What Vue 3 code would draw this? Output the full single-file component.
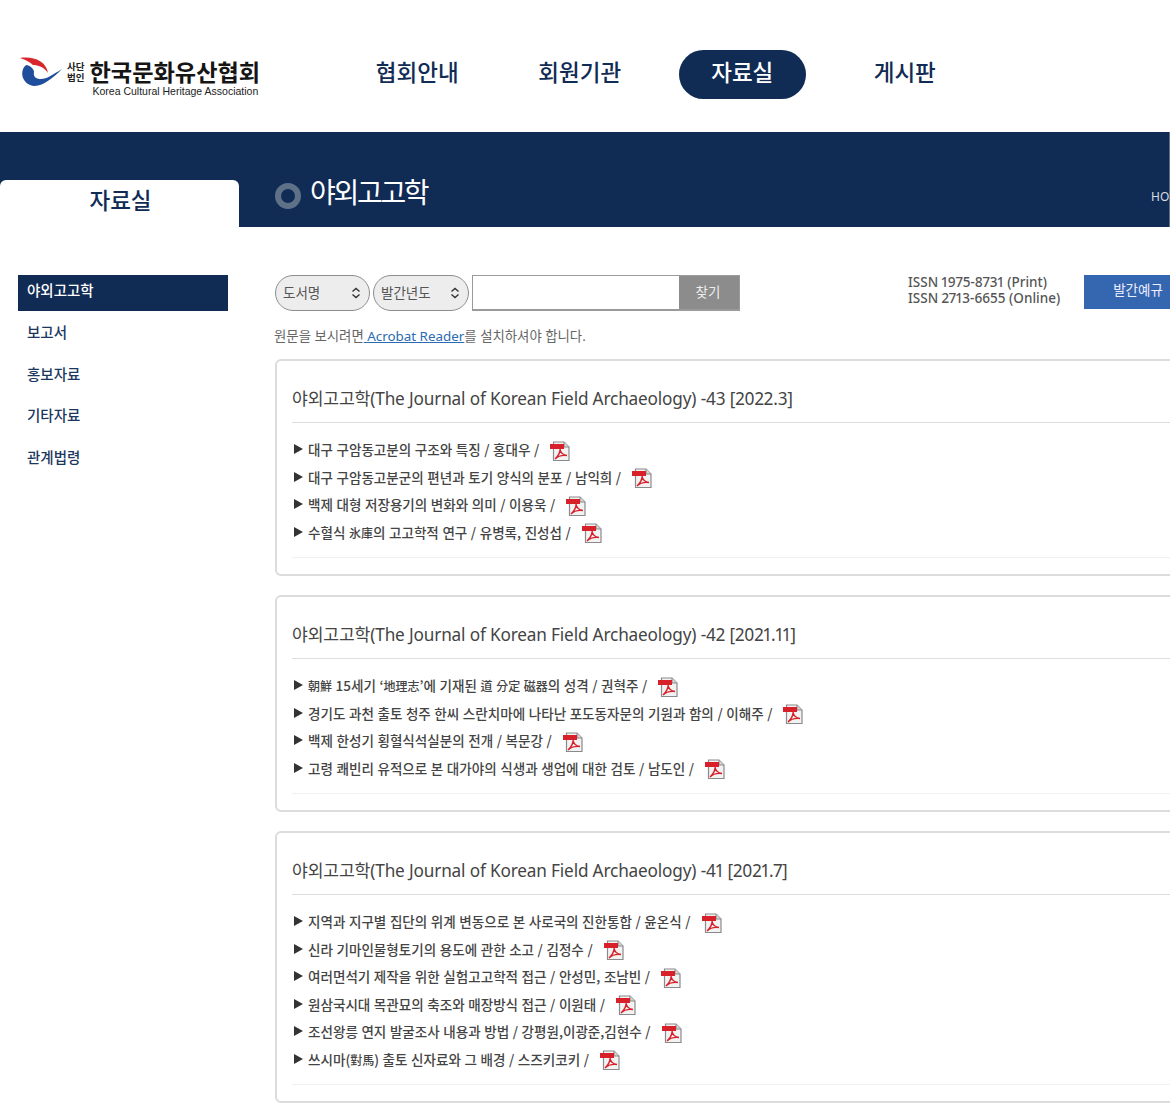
<script setup>
const navItems = ['협회안내', '회원기관', '자료실', '게시판']
const sideItems = ['야외고고학', '보고서', '홍보자료', '기타자료', '관계법령']
const volumes = [
  {
    title: '야외고고학(The Journal of Korean Field Archaeology) -43 [2022.3]',
    rows: [
      '대구 구암동고분의 구조와 특징 / 홍대우 /',
      '대구 구암동고분군의 편년과 토기 양식의 분포 / 남익희 /',
      '백제 대형 저장용기의 변화와 의미 / 이용욱 /',
      '수혈식 氷庫의 고고학적 연구 / 유병록, 진성섭 /'
    ]
  },
  {
    title: '야외고고학(The Journal of Korean Field Archaeology) -42 [2021.11]',
    rows: [
      '朝鮮 15세기 ‘地理志’에 기재된 道 分定 磁器의 성격 / 권혁주 /',
      '경기도 과천 출토 청주 한씨 스란치마에 나타난 포도동자문의 기원과 함의 / 이해주 /',
      '백제 한성기 횡혈식석실분의 전개 / 복문강 /',
      '고령 쾌빈리 유적으로 본 대가야의 식생과 생업에 대한 검토 / 남도인 /'
    ]
  },
  {
    title: '야외고고학(The Journal of Korean Field Archaeology) -41 [2021.7]',
    rows: [
      '지역과 지구별 집단의 위계 변동으로 본 사로국의 진한통합 / 윤온식 /',
      '신라 기마인물형토기의 용도에 관한 소고 / 김정수 /',
      '여러면석기 제작을 위한 실험고고학적 접근 / 안성민, 조남빈 /',
      '원삼국시대 목관묘의 축조와 매장방식 접근 / 이원태 /',
      '조선왕릉 연지 발굴조사 내용과 방법 / 강평원,이광준,김현수 /',
      '쓰시마(對馬) 출토 신자료와 그 배경 / 스즈키코키 /'
    ]
  }
]
// Hanja runs are set slightly smaller than the hangul around them
const segments = (text) => text.split(/([\u4e00-\u9fff]+)/).filter(Boolean)
const isHan = (s) => /[\u4e00-\u9fff]/.test(s)
</script>

<template>
  <div class="page">
    <header class="top">
      <div class="logo">
        <svg class="mark" width="43" height="31" viewBox="0 0 43 31">
          <path d="M0 1C12-1 26 3 28 16C24 10 18 8 13 8C10 5 6 3 0 1Z" fill="#d8262c" />
          <path d="M6 8C0 13 1 24 10 28C20 32 32 22 42 12C32 18 27 22 21 22C16 22 13 20 14 15C14 12 10 8 6 8Z" fill="#1f4e9c" />
        </svg>
        <div class="corp"><span>사단</span><span>법인</span></div>
        <div class="names">
          <div class="ko">한국문화유산협회</div>
          <div class="en">Korea Cultural Heritage Association</div>
        </div>
      </div>
      <nav class="gnb">
        <a v-for="n in navItems" :key="n" :class="{ on: n === '자료실' }">{{ n }}</a>
      </nav>
    </header>

    <section class="band">
      <div class="tab">자료실</div>
      <div class="band-title">
        <i class="ring"></i>
        <h1>야외고고학</h1>
      </div>
      <div class="crumb">HOME</div>
    </section>

    <div class="body">
      <aside class="side">
        <a v-for="s in sideItems" :key="s" :class="{ on: s === '야외고고학' }">{{ s }}</a>
      </aside>

      <main class="main">
        <div class="search">
          <div class="sel sel-a">도서명
            <svg width="10" height="12" viewBox="0 0 10 12"><path d="M1.5 4.5L5 1.5L8.5 4.5M1.5 7.5L5 10.5L8.5 7.5" fill="none" stroke="#333" stroke-width="1.4" /></svg>
          </div>
          <div class="sel sel-b">발간년도
            <svg width="10" height="12" viewBox="0 0 10 12"><path d="M1.5 4.5L5 1.5L8.5 4.5M1.5 7.5L5 10.5L8.5 7.5" fill="none" stroke="#333" stroke-width="1.4" /></svg>
          </div>
          <div class="query">
            <div class="input"></div>
            <div class="find">찾기</div>
          </div>
          <div class="issn">ISSN 1975-8731 (Print)<br />ISSN 2713-6655 (Online)</div>
          <div class="rules">발간예규</div>
        </div>
        <p class="note">원문을 보시려면<a> Acrobat Reader</a>를 설치하셔야 합니다.</p>

        <article v-for="v in volumes" :key="v.title" class="card">
          <h2>{{ v.title }}</h2>
          <ul>
            <li v-for="r in v.rows" :key="r">
              <span class="tri"></span>
              <span class="txt"><template v-for="(s, i) in segments(r)" :key="i"><span v-if="isHan(s)" class="han">{{ s }}</span><template v-else>{{ s }}</template></template></span>
              <svg class="pdf" width="20" height="20" viewBox="0 0 20 20">
                <path d="M3.5 1H14L19 6V19.5H3.5Z" fill="#f2f2f2" stroke="#8a8a8a" stroke-width="1.2" />
                <path d="M14 1V6H19" fill="#d5d5d5" stroke="#8a8a8a" stroke-width="1" />
                <rect x="0" y="3" width="14" height="5" fill="#d8202a" />
                <path d="M5 18C8 15.5 10.5 11 10 8C10.5 11.5 13 14 17 14.5C12.5 14 8 15 5 18Z" fill="none" stroke="#d8202a" stroke-width="1.4" />
              </svg>
            </li>
          </ul>
        </article>
      </main>
    </div>
  </div>
</template>

<style scoped>
.page {
  width: 1170px;
  height: 1113px;
  overflow: hidden;
  background: #fff;
  font-family: "Noto Sans", "Noto Sans CJK KR", sans-serif;
}
.top {
  height: 132px;
  display: flex;
  align-items: flex-start;
  box-sizing: border-box;
}
.logo {
  width: 336px;
  flex: none;
  display: flex;
  align-items: flex-start;
  padding: 57px 0 0 20px;
  box-sizing: border-box;
}
.mark { flex: none; }
.corp {
  display: flex;
  flex-direction: column;
  margin: 4px 0 0 4px;
  font-family: "Noto Sans CJK KR", sans-serif;
  font-size: 9.5px;
  font-weight: 700;
  line-height: 11px;
  color: #222;
}
.names { margin-left: 5px; }
.ko {
  font-family: "Noto Sans CJK KR", sans-serif;
  font-size: 23.2px;
  font-weight: 700;
  line-height: 28px;
  color: #151515;
  white-space: nowrap;
  width: 170px;
}
.en {
  font-family: "Liberation Sans", sans-serif;
  font-size: 10.5px;
  line-height: 12px;
  margin-left: 3px;
  color: #222;
  white-space: nowrap;
  width: 166px;
}
.gnb {
  display: grid;
  grid-template-columns: repeat(4, 162.5px);
  padding-top: 50px;
}
.gnb a {
  justify-self: center;
  height: 49px;
  padding: 0 32.5px;
  border-radius: 24.5px;
  font-family: "Noto Sans CJK KR", sans-serif;
  font-size: 22.5px;
  font-weight: 500;
  line-height: 43px;
  color: #102b54;
  white-space: nowrap;
}
.gnb a.on {
  background: #102b54;
  color: #fff;
}
.band {
  width: 1169px;
  height: 95px;
  background: #102b54;
  display: flex;
  align-items: flex-end;
  position: relative;
  border-right: 1px solid #5d6f88;
}
.tab {
  width: 239px;
  height: 47px;
  flex: none;
  box-sizing: border-box;
  padding-left: 2px;
  background: #fff;
  border-radius: 6px 6px 0 0;
  text-align: center;
  font-family: "Noto Sans CJK KR", sans-serif;
  font-size: 22.5px;
  font-weight: 500;
  line-height: 39px;
  color: #102b54;
}
.band-title {
  display: flex;
  align-items: center;
  gap: 9px;
  margin: 0 0 12px 36px;
  flex: 1;
}
.ring {
  display: block;
  width: 26px;
  height: 26px;
  border: 6px solid #5f7189;
  border-radius: 50%;
  box-sizing: border-box;
  margin-top: 5px;
}
h1 {
  margin: 0 0 5px;
  font-family: "Noto Sans CJK KR", sans-serif;
  font-size: 28px;
  font-weight: 400;
  line-height: 38px;
  letter-spacing: -2.3px;
  color: #fff;
}
.crumb {
  position: absolute;
  left: 1151px;
  top: 57px;
  width: 18px;
  overflow: hidden;
  font-size: 12px;
  line-height: 16px;
  color: #d8dde5;
}
.body {
  display: flex;
  padding-top: 48px;
}
.side {
  width: 210px;
  margin-left: 18px;
  flex: none;
  display: flex;
  flex-direction: column;
}
.side a {
  height: 36px;
  margin-bottom: 5.8px;
  padding-left: 9px;
  font-family: "Noto Sans CJK KR", sans-serif;
  font-size: 14.5px;
  font-weight: 500;
  line-height: 30px;
  color: #1c3860;
}
.side a.on {
  background: #102b54;
  color: #fff;
}
.main {
  width: 920px;
  margin-left: 47px;
  flex: none;
}
.search {
  display: flex;
  align-items: flex-start;
  height: 36px;
}
.sel {
  height: 36px;
  box-sizing: border-box;
  border: 1px solid #8d8d8d;
  border-radius: 18px;
  background: #ededed;
  display: flex;
  align-items: center;
  justify-content: space-between;
  padding: 0 8px 0 7px;
  font-size: 13.5px;
  line-height: 32px;
  color: #555;
  margin-right: 3px;
}
.sel-a { width: 95px; }
.sel-b { width: 96px; }
.query {
  width: 268px;
  height: 36px;
  flex: none;
  display: flex;
  box-sizing: border-box;
  border: 1px solid #9a9a9a;
  border-width: 1px 1px 2px 1px;
}
.input {
  flex: 1;
  background: #fff;
}
.find {
  width: 60px;
  padding-right: 2px;
  box-sizing: border-box;
  background: #8c8c8c;
  color: #eee;
  text-align: center;
  font-size: 13.5px;
  line-height: 32px;
}
.issn {
  margin: -1px 0 0 168px;
  width: 176px;
  flex: none;
  font-size: 13.5px;
  line-height: 16px;
  color: #555;
  font-weight: 500;
  font-variant-numeric: proportional-nums;
  white-space: nowrap;
}
.rules {
  width: 110px;
  height: 34px;
  flex: none;
  padding-right: 2px;
  background: #3566b0;
  color: #eef;
  text-align: center;
  font-size: 13.5px;
  line-height: 31px;
  box-sizing: border-box;
}
.note {
  margin: 15px 0 12px -1px;
  height: 21px;
  font-size: 13.4px;
  line-height: 21px;
  color: #666;
  white-space: nowrap;
}
.note a {
  color: #2a6bb3;
  text-decoration: underline;
}
.card {
  border: 2px solid #dcdcdc;
  border-radius: 6px;
  box-sizing: border-box;
  margin-bottom: 19px;
  padding: 0 0 16px 15px;
}
h2 {
  margin: 0;
  height: 62px;
  box-sizing: border-box;
  border-bottom: 1px solid #ddd;
  padding-top: 25px;
  font-size: 17.2px;
  font-weight: 400;
  line-height: 25px;
  color: #444;
  white-space: nowrap;
  font-variant-numeric: proportional-nums;
  letter-spacing: -0.16px;
}
ul {
  list-style: none;
  margin: 0;
  padding: 12.5px 0 11.5px;
  border-bottom: 1px solid #f1f1f1;
}
li {
  height: 27.5px;
  display: flex;
  align-items: center;
  white-space: nowrap;
  font-family: "Noto Sans CJK KR", sans-serif;
  font-size: 13.55px;
  font-weight: 500;
  color: #444;
}
.tri {
  width: 0;
  height: 0;
  margin: 0 5px 0 2px;
  border-left: 9px solid #333;
  border-top: 5px solid transparent;
  border-bottom: 5px solid transparent;
}
.txt { word-spacing: 0.5px; }
.han { font-size: 12px; }
.pdf {
  margin: 2.5px 0 0 11px;
  flex: none;
}
</style>

<style>
html, body { margin: 0; background: #fff; }
</style>
